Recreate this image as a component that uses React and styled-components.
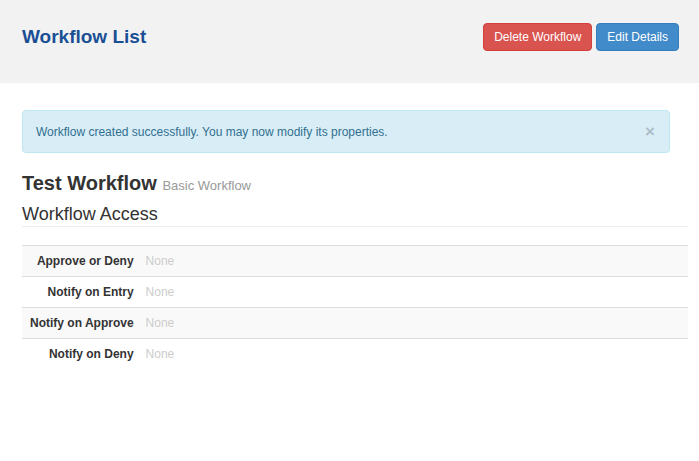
import React from 'react';
import styled, { createGlobalStyle } from 'styled-components';

const GlobalStyle = createGlobalStyle`
  html, body {
    margin: 0;
    padding: 0;
    background: #fff;
    font-family: "Liberation Sans", Arial, sans-serif;
    color: #333;
  }
`;

const rules = [
  { label: 'Approve or Deny', value: 'None' },
  { label: 'Notify on Entry', value: 'None' },
  { label: 'Notify on Approve', value: 'None' },
  { label: 'Notify on Deny', value: 'None' },
];

const App = () => {
  return (
    <>
      <GlobalStyle />
      <Header>
        <PageTitle>Workflow List</PageTitle>
        <Actions>
          <Button $variant="danger">Delete Workflow</Button>
          <Button $variant="primary">Edit Details</Button>
        </Actions>
      </Header>
      <Main>
        <Alert>
          <span>Workflow created successfully. You may now modify its properties.</span>
          <Close>×</Close>
        </Alert>
        <WorkflowName>
          Test Workflow <small>Basic Workflow</small>
        </WorkflowName>
        <SectionTitle>Workflow Access</SectionTitle>
        <Table>
          <tbody>
            {rules.map((rule, i) => (
              <Row key={rule.label} $striped={i % 2 === 0}>
                <Label>{rule.label}</Label>
                <Value>{rule.value}</Value>
              </Row>
            ))}
          </tbody>
        </Table>
      </Main>
    </>
  );
};

const Header = styled.header`
  height: 83px;
  background-color: #f2f2f2;
  display: flex;
  align-items: flex-start;
  justify-content: space-between;
  padding: 23px 20px 0 22px;
  box-sizing: border-box;
`;

const PageTitle = styled.h1`
  margin: 0;
  font-size: 19px;
  font-weight: bold;
  color: #1a4f95;
  line-height: 28px;
`;

const Actions = styled.div`
  display: flex;
  gap: 4px;
`;

const Button = styled.button`
  height: 28px;
  padding: 0 10px;
  border: 1px solid ${({ $variant }) => ($variant === 'danger' ? '#d43f3a' : '#357ebd')};
  border-radius: 4px;
  background-color: ${({ $variant }) => ($variant === 'danger' ? '#d9534f' : '#428bca')};
  color: #fff;
  font-family: inherit;
  font-size: 12px;
  cursor: pointer;
`;

const Main = styled.main`
  padding: 27px 11px 0 22px;
`;

const Alert = styled.div`
  height: 43px;
  margin-right: 18px;
  padding: 0 14px 0 13px;
  box-sizing: border-box;
  display: flex;
  align-items: center;
  justify-content: space-between;
  background-color: #d9edf7;
  border: 1px solid #bce8f1;
  border-radius: 4px;
  color: #31708f;
  font-size: 12px;
`;

const Close = styled.span`
  font-size: 17px;
  font-weight: bold;
  color: #000;
  opacity: 0.2;
  line-height: 1;
`;

const WorkflowName = styled.h2`
  margin: 18px 0 0;
  font-size: 20px;
  font-weight: bold;
  line-height: 24px;
  color: #333;

  small {
    font-size: 13px;
    font-weight: normal;
    color: #999;
  }
`;

const SectionTitle = styled.h3`
  margin: 6px 0 0;
  padding-bottom: 1px;
  border-bottom: 1px solid #eee;
  font-size: 18px;
  font-weight: normal;
  line-height: 21px;
  color: #333;
`;

const Table = styled.table`
  width: 100%;
  margin-top: 18px;
  border-collapse: collapse;
  font-size: 12px;
`;

const Row = styled.tr`
  height: 31px;
  border-top: 1px solid #ddd;
  background-color: ${({ $striped }) => ($striped ? '#f9f9f9' : 'transparent')};
`;

const Label = styled.th`
  width: 99px;
  padding: 0 6px 0 8px;
  text-align: right;
  font-weight: bold;
  color: #333;
  white-space: nowrap;
`;

const Value = styled.td`
  padding: 0 6px;
  color: #ccc;
`;

export default App;
